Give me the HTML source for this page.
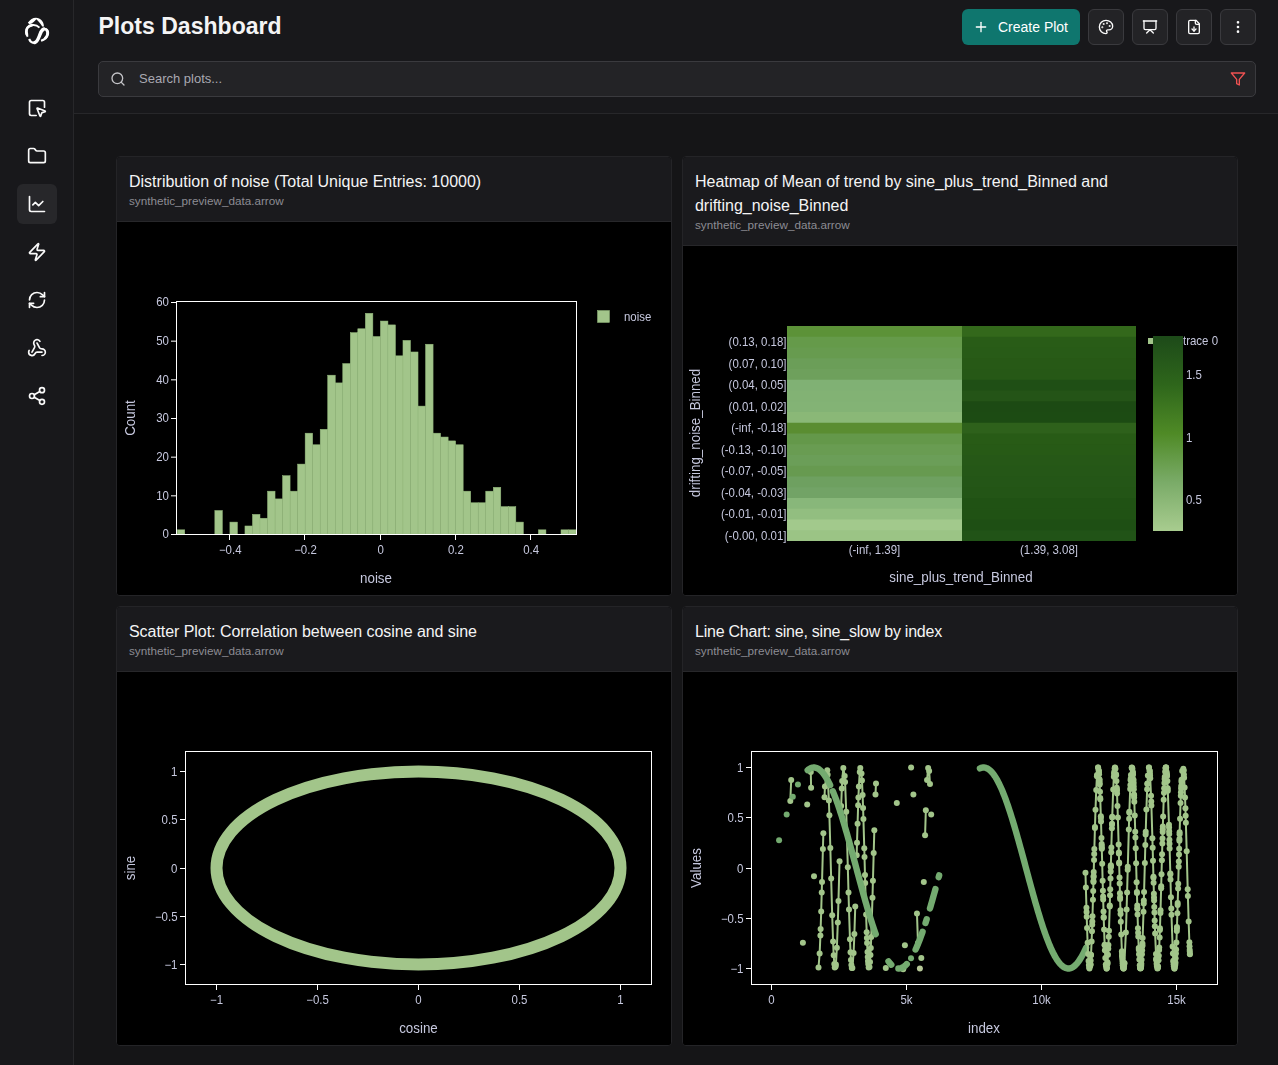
<!DOCTYPE html>
<html lang="en"><head><meta charset="utf-8"><title>Plots Dashboard</title>
<style>
*{box-sizing:border-box;margin:0;padding:0}
html,body{width:1278px;height:1065px;overflow:hidden;background:#151517;font-family:"Liberation Sans", sans-serif;color:#fafafa}
#side{position:absolute;left:0;top:0;width:74px;height:1065px;background:#18181b;border-right:1px solid #27272a}
#logo{position:absolute;left:17px;top:10px}
.nav{position:absolute;left:17px;width:40px;height:40px;border-radius:6px;display:flex;align-items:center;justify-content:center;color:#fafafa}
.nav.active{background:#27272a}
#top{position:absolute;left:74px;top:0;width:1204px;height:114px;background:#18181b;border-bottom:1px solid #27272a}
#top h1{position:absolute;left:24.4px;top:12px;font-size:23px;line-height:28px;font-weight:700;color:#f4f4f5;white-space:nowrap;letter-spacing:0.03px}
.btn{position:absolute;top:9px;height:36px;border-radius:6px;display:flex;align-items:center;justify-content:center}
.btn.primary{left:888px;width:118px;background:#0f766e;color:#fff;font-size:14px;font-weight:500;gap:9px;padding-right:1px}
.btn.ic{width:36px;background:#232326;border:1px solid #3a3a3e;color:#fafafa}
#search{position:absolute;left:24px;top:61px;width:1158px;height:36px;border-radius:5px;background:#232326;border:1px solid #3a3a3e}
#search .s{position:absolute;left:11px;top:9px;color:#c4c4c8}
#search span{position:absolute;left:40px;top:8.3px;font-size:13px;line-height:17px;color:#a9a9b2}
#search .f{position:absolute;right:9px;top:9px;color:#f05252}
.card{position:absolute;width:556px;height:440px;border:1px solid #242427;border-radius:4px;background:#000;overflow:hidden}
.chead{position:absolute;left:0;top:0;width:554px;background:#1a1a1d;border-bottom:1px solid #27272a;padding:13px 12px 0 12px}
.chead h2{font-size:16px;line-height:24px;font-weight:400;color:#f4f4f5;letter-spacing:0}
.chead p{font-size:11.7px;line-height:14px;color:#8c8c93;margin-top:0}
.cbody{position:absolute;left:0;width:554px;bottom:0;background:#000}
</style></head><body>
<aside id="side"><div id="logo"><svg width="40" height="40" viewBox="0 0 1065 1065" fill="none" stroke="#fff" stroke-linecap="butt" stroke-linejoin="round"><path fill="#fff" stroke="none" d="M288 338C345 262 425 208 505 208C625 210 712 300 718 438L672 442C630 362 580 300 515 243C470 300 410 352 332 380Z"/><path stroke-width="52" d="M598 470C545 415 470 392 400 402C295 422 240 500 248 585C252 635 264 675 284 712"/><path stroke-width="76" stroke-linecap="round" d="M400 404C300 425 242 500 250 585C252 610 256 630 262 650"/><path stroke-width="58" d="M322 772C350 845 420 882 470 870C550 848 585 720 615 640C650 545 700 500 742 500C800 505 830 570 812 650C795 725 725 790 640 818"/><path stroke-width="92" stroke-linecap="round" d="M470 868C550 846 585 720 615 640C640 570 675 525 712 508"/><path stroke-width="76" stroke-linecap="round" d="M780 525C815 555 826 600 812 650C805 685 785 718 758 745"/></svg></div><a class="nav" style="top:88px"><svg width="20" height="20" viewBox="0 0 24 24" fill="none" stroke="currentColor" stroke-width="2" stroke-linecap="round" stroke-linejoin="round" ><path d="M12.034 12.681a.498.498 0 0 1 .647-.647l9 3.5a.5.5 0 0 1-.033.943l-3.444 1.068a1 1 0 0 0-.66.66l-1.067 3.443a.5.5 0 0 1-.943.033z"/><path d="M21 11V5a2 2 0 0 0-2-2H5a2 2 0 0 0-2 2v14a2 2 0 0 0 2 2h6"/></svg></a><a class="nav" style="top:136px"><svg width="20" height="20" viewBox="0 0 24 24" fill="none" stroke="currentColor" stroke-width="2" stroke-linecap="round" stroke-linejoin="round" ><path d="M20 20a2 2 0 0 0 2-2V8a2 2 0 0 0-2-2h-7.9a2 2 0 0 1-1.69-.9L9.6 3.9A2 2 0 0 0 7.93 3H4a2 2 0 0 0-2 2v13a2 2 0 0 0 2 2Z"/></svg></a><a class="nav active" style="top:184px"><svg width="20" height="20" viewBox="0 0 24 24" fill="none" stroke="currentColor" stroke-width="2" stroke-linecap="round" stroke-linejoin="round" ><path d="M3 3v16a2 2 0 0 0 2 2h16"/><path d="m19 9-5 5-4-4-3 3"/></svg></a><a class="nav" style="top:232px"><svg width="20" height="20" viewBox="0 0 24 24" fill="none" stroke="currentColor" stroke-width="2" stroke-linecap="round" stroke-linejoin="round" ><path d="M4 14a1 1 0 0 1-.78-1.63l9.9-10.2a.5.5 0 0 1 .86.46l-1.92 6.02A1 1 0 0 0 13 10h7a1 1 0 0 1 .78 1.63l-9.9 10.2a.5.5 0 0 1-.86-.46l1.92-6.02A1 1 0 0 0 11 14z"/></svg></a><a class="nav" style="top:280px"><svg width="20" height="20" viewBox="0 0 24 24" fill="none" stroke="currentColor" stroke-width="2" stroke-linecap="round" stroke-linejoin="round" ><path d="M3 12a9 9 0 0 1 9-9 9.75 9.75 0 0 1 6.74 2.74L21 8"/><path d="M21 3v5h-5"/><path d="M21 12a9 9 0 0 1-9 9 9.75 9.75 0 0 1-6.74-2.74L3 16"/><path d="M8 16H3v5"/></svg></a><a class="nav" style="top:328px"><svg width="20" height="20" viewBox="0 0 24 24" fill="none" stroke="currentColor" stroke-width="2" stroke-linecap="round" stroke-linejoin="round" ><path d="M18 16.98h-5.99c-1.1 0-1.95.94-2.48 1.9A4 4 0 0 1 2 17c.01-.7.2-1.4.57-2"/><path d="m6 17 3.13-5.78c.53-.97.1-2.18-.5-3.1a4 4 0 1 1 6.89-4.06"/><path d="m12 6 3.13 5.73C15.66 12.7 16.9 13 18 13a4 4 0 0 1 0 8"/></svg></a><a class="nav" style="top:376px"><svg width="20" height="20" viewBox="0 0 24 24" fill="none" stroke="currentColor" stroke-width="2" stroke-linecap="round" stroke-linejoin="round" ><circle cx="18" cy="5" r="3"/><circle cx="6" cy="12" r="3"/><circle cx="18" cy="19" r="3"/><line x1="8.59" x2="15.42" y1="13.51" y2="17.49"/><line x1="15.41" x2="8.59" y1="6.51" y2="10.49"/></svg></a></aside>
<div id="top"><h1>Plots Dashboard</h1>
<div class="btn primary"><svg width="16" height="16" viewBox="0 0 24 24" fill="none" stroke="currentColor" stroke-width="2" stroke-linecap="round" stroke-linejoin="round" ><path d="M5 12h14"/><path d="M12 5v14"/></svg><span>Create Plot</span></div>
<div class="btn ic" style="left:1014px"><svg width="16" height="16" viewBox="0 0 24 24" fill="none" stroke="currentColor" stroke-width="2" stroke-linecap="round" stroke-linejoin="round" ><circle cx="13.5" cy="6.5" r=".5" fill="currentColor"/><circle cx="17.5" cy="10.5" r=".5" fill="currentColor"/><circle cx="8.5" cy="7.5" r=".5" fill="currentColor"/><circle cx="6.5" cy="12.5" r=".5" fill="currentColor"/><path d="M12 2C6.5 2 2 6.5 2 12s4.5 10 10 10c.926 0 1.648-.746 1.648-1.688 0-.437-.18-.835-.437-1.125-.29-.289-.438-.652-.438-1.125a1.64 1.64 0 0 1 1.668-1.668h1.996c3.051 0 5.555-2.503 5.555-5.554C21.965 6.012 17.461 2 12 2z"/></svg></div>
<div class="btn ic" style="left:1058px"><svg width="16" height="16" viewBox="0 0 24 24" fill="none" stroke="currentColor" stroke-width="2" stroke-linecap="round" stroke-linejoin="round" ><path d="M2 3h20"/><path d="M21 3v11a2 2 0 0 1-2 2H5a2 2 0 0 1-2-2V3"/><path d="m7 21 5-5 5 5"/></svg></div>
<div class="btn ic" style="left:1102px"><svg width="16" height="16" viewBox="0 0 24 24" fill="none" stroke="currentColor" stroke-width="2" stroke-linecap="round" stroke-linejoin="round" ><path d="M15 2H6a2 2 0 0 0-2 2v16a2 2 0 0 0 2 2h12a2 2 0 0 0 2-2V7Z"/><path d="M14 2v4a2 2 0 0 0 2 2h4"/><path d="M12 18v-6"/><path d="m9 15 3 3 3-3"/></svg></div>
<div class="btn ic" style="left:1146px"><svg width="16" height="16" viewBox="0 0 24 24" fill="none" stroke="currentColor" stroke-width="2" stroke-linecap="round" stroke-linejoin="round" ><circle cx="12" cy="12" r="1"/><circle cx="12" cy="5" r="1"/><circle cx="12" cy="19" r="1"/></svg></div>
<div id="search"><div class="s"><svg width="16" height="16" viewBox="0 0 24 24" fill="none" stroke="currentColor" stroke-width="2" stroke-linecap="round" stroke-linejoin="round" ><circle cx="11" cy="11" r="8"/><path d="m21 21-4.3-4.3"/></svg></div><span>Search plots...</span><div class="f"><svg width="16" height="16" viewBox="0 0 24 24" fill="none" stroke="currentColor" stroke-width="2" stroke-linecap="round" stroke-linejoin="round" ><polygon points="22 3 2 3 10 12.46 10 19 14 21 14 12.46 22 3"/></svg></div></div>
</div>
<main>
<section class="card" style="left:116px;top:156px"><header class="chead" style="height:65px"><h2 style="letter-spacing:0px">Distribution of noise (Total Unique Entries: 10000)</h2><p>synthetic_preview_data.arrow</p></header><div class="cbody" style="top:65px"><svg width="554" height="373" viewBox="117 222 554 373" font-family='"Liberation Sans", sans-serif' style="display:block;will-change:transform"><g><rect x="177.22" y="529.83" width="7.53" height="4.17" fill="#a2c58a" stroke="#94ba7d" stroke-width="0.5"/><rect x="214.85" y="510.5" width="7.53" height="23.5" fill="#a2c58a" stroke="#94ba7d" stroke-width="0.5"/><rect x="229.9" y="522.1" width="7.53" height="11.9" fill="#a2c58a" stroke="#94ba7d" stroke-width="0.5"/><rect x="244.95" y="525.97" width="7.53" height="8.03" fill="#a2c58a" stroke="#94ba7d" stroke-width="0.5"/><rect x="252.47" y="514.37" width="7.53" height="19.63" fill="#a2c58a" stroke="#94ba7d" stroke-width="0.5"/><rect x="260" y="518.23" width="7.53" height="15.77" fill="#a2c58a" stroke="#94ba7d" stroke-width="0.5"/><rect x="267.52" y="491.17" width="7.52" height="42.83" fill="#a2c58a" stroke="#94ba7d" stroke-width="0.5"/><rect x="275.05" y="498.9" width="7.53" height="35.1" fill="#a2c58a" stroke="#94ba7d" stroke-width="0.5"/><rect x="282.57" y="475.7" width="7.52" height="58.3" fill="#a2c58a" stroke="#94ba7d" stroke-width="0.5"/><rect x="290.1" y="491.17" width="7.53" height="42.83" fill="#a2c58a" stroke="#94ba7d" stroke-width="0.5"/><rect x="297.62" y="464.1" width="7.52" height="69.9" fill="#a2c58a" stroke="#94ba7d" stroke-width="0.5"/><rect x="305.15" y="433.17" width="7.52" height="100.83" fill="#a2c58a" stroke="#94ba7d" stroke-width="0.5"/><rect x="312.67" y="444.77" width="7.53" height="89.23" fill="#a2c58a" stroke="#94ba7d" stroke-width="0.5"/><rect x="320.2" y="429.3" width="7.52" height="104.7" fill="#a2c58a" stroke="#94ba7d" stroke-width="0.5"/><rect x="327.72" y="375.17" width="7.53" height="158.83" fill="#a2c58a" stroke="#94ba7d" stroke-width="0.5"/><rect x="335.25" y="382.9" width="7.53" height="151.1" fill="#a2c58a" stroke="#94ba7d" stroke-width="0.5"/><rect x="342.77" y="363.57" width="7.52" height="170.43" fill="#a2c58a" stroke="#94ba7d" stroke-width="0.5"/><rect x="350.3" y="332.63" width="7.53" height="201.37" fill="#a2c58a" stroke="#94ba7d" stroke-width="0.5"/><rect x="357.82" y="328.77" width="7.53" height="205.23" fill="#a2c58a" stroke="#94ba7d" stroke-width="0.5"/><rect x="365.35" y="313.3" width="7.52" height="220.7" fill="#a2c58a" stroke="#94ba7d" stroke-width="0.5"/><rect x="372.87" y="336.5" width="7.53" height="197.5" fill="#a2c58a" stroke="#94ba7d" stroke-width="0.5"/><rect x="380.4" y="321.03" width="7.53" height="212.97" fill="#a2c58a" stroke="#94ba7d" stroke-width="0.5"/><rect x="387.93" y="324.9" width="7.52" height="209.1" fill="#a2c58a" stroke="#94ba7d" stroke-width="0.5"/><rect x="395.45" y="355.83" width="7.53" height="178.17" fill="#a2c58a" stroke="#94ba7d" stroke-width="0.5"/><rect x="402.97" y="340.37" width="7.52" height="193.63" fill="#a2c58a" stroke="#94ba7d" stroke-width="0.5"/><rect x="410.5" y="351.97" width="7.53" height="182.03" fill="#a2c58a" stroke="#94ba7d" stroke-width="0.5"/><rect x="418.02" y="406.1" width="7.52" height="127.9" fill="#a2c58a" stroke="#94ba7d" stroke-width="0.5"/><rect x="425.55" y="344.23" width="7.53" height="189.77" fill="#a2c58a" stroke="#94ba7d" stroke-width="0.5"/><rect x="433.07" y="433.17" width="7.52" height="100.83" fill="#a2c58a" stroke="#94ba7d" stroke-width="0.5"/><rect x="440.6" y="437.03" width="7.53" height="96.97" fill="#a2c58a" stroke="#94ba7d" stroke-width="0.5"/><rect x="448.12" y="440.9" width="7.53" height="93.1" fill="#a2c58a" stroke="#94ba7d" stroke-width="0.5"/><rect x="455.65" y="444.77" width="7.52" height="89.23" fill="#a2c58a" stroke="#94ba7d" stroke-width="0.5"/><rect x="463.17" y="491.17" width="7.53" height="42.83" fill="#a2c58a" stroke="#94ba7d" stroke-width="0.5"/><rect x="470.7" y="502.77" width="7.52" height="31.23" fill="#a2c58a" stroke="#94ba7d" stroke-width="0.5"/><rect x="478.22" y="502.77" width="7.53" height="31.23" fill="#a2c58a" stroke="#94ba7d" stroke-width="0.5"/><rect x="485.75" y="491.17" width="7.52" height="42.83" fill="#a2c58a" stroke="#94ba7d" stroke-width="0.5"/><rect x="493.27" y="487.3" width="7.52" height="46.7" fill="#a2c58a" stroke="#94ba7d" stroke-width="0.5"/><rect x="500.8" y="506.63" width="7.52" height="27.37" fill="#a2c58a" stroke="#94ba7d" stroke-width="0.5"/><rect x="508.32" y="506.63" width="7.52" height="27.37" fill="#a2c58a" stroke="#94ba7d" stroke-width="0.5"/><rect x="515.85" y="522.1" width="7.53" height="11.9" fill="#a2c58a" stroke="#94ba7d" stroke-width="0.5"/><rect x="538.42" y="529.83" width="7.52" height="4.17" fill="#a2c58a" stroke="#94ba7d" stroke-width="0.5"/><rect x="561" y="529.83" width="7.52" height="4.17" fill="#a2c58a" stroke="#94ba7d" stroke-width="0.5"/><rect x="568.52" y="529.83" width="7.52" height="4.17" fill="#a2c58a" stroke="#94ba7d" stroke-width="0.5"/></g><rect x="176.5" y="301.5" width="400" height="233" fill="none" stroke="#fff" stroke-width="1"/><line x1="229.5" x2="229.5" y1="535" y2="540" stroke="#fff" stroke-width="1"/><line x1="304.5" x2="304.5" y1="535" y2="540" stroke="#fff" stroke-width="1"/><line x1="380.5" x2="380.5" y1="535" y2="540" stroke="#fff" stroke-width="1"/><line x1="455.5" x2="455.5" y1="535" y2="540" stroke="#fff" stroke-width="1"/><line x1="530.5" x2="530.5" y1="535" y2="540" stroke="#fff" stroke-width="1"/><line x1="171" x2="176" y1="534.5" y2="534.5" stroke="#fff" stroke-width="1"/><line x1="171" x2="176" y1="495.83" y2="495.83" stroke="#fff" stroke-width="1"/><line x1="171" x2="176" y1="457.17" y2="457.17" stroke="#fff" stroke-width="1"/><line x1="171" x2="176" y1="418.5" y2="418.5" stroke="#fff" stroke-width="1"/><line x1="171" x2="176" y1="379.83" y2="379.83" stroke="#fff" stroke-width="1"/><line x1="171" x2="176" y1="341.17" y2="341.17" stroke="#fff" stroke-width="1"/><line x1="171" x2="176" y1="302.5" y2="302.5" stroke="#fff" stroke-width="1"/><text transform="translate(230.2,553.5) scale(0.955,1)" font-size="12" text-anchor="middle" fill="#c6c8de" >−0.4</text><text transform="translate(305.45,553.5) scale(0.955,1)" font-size="12" text-anchor="middle" fill="#c6c8de" >−0.2</text><text transform="translate(380.7,553.5) scale(0.955,1)" font-size="12" text-anchor="middle" fill="#c6c8de" >0</text><text transform="translate(455.95,553.5) scale(0.955,1)" font-size="12" text-anchor="middle" fill="#c6c8de" >0.2</text><text transform="translate(531.2,553.5) scale(0.955,1)" font-size="12" text-anchor="middle" fill="#c6c8de" >0.4</text><text transform="translate(169,538.3) scale(0.955,1)" font-size="12" text-anchor="end" fill="#c6c8de" >0</text><text transform="translate(169,499.63) scale(0.955,1)" font-size="12" text-anchor="end" fill="#c6c8de" >10</text><text transform="translate(169,460.97) scale(0.955,1)" font-size="12" text-anchor="end" fill="#c6c8de" >20</text><text transform="translate(169,422.3) scale(0.955,1)" font-size="12" text-anchor="end" fill="#c6c8de" >30</text><text transform="translate(169,383.63) scale(0.955,1)" font-size="12" text-anchor="end" fill="#c6c8de" >40</text><text transform="translate(169,344.97) scale(0.955,1)" font-size="12" text-anchor="end" fill="#c6c8de" >50</text><text transform="translate(169,306.3) scale(0.955,1)" font-size="12" text-anchor="end" fill="#c6c8de" >60</text><text transform="translate(376,583) scale(0.955,1)" font-size="14" text-anchor="middle" fill="#c6c8de" >noise</text><text transform="translate(135,418) rotate(-90) scale(0.955,1)" font-size="14" text-anchor="middle" fill="#c6c8de">Count</text><rect x="597.5" y="310.5" width="12" height="12" fill="#a2c58a" stroke="#94ba7d" stroke-width="0.5"/><text transform="translate(624,321) scale(0.955,1)" font-size="12" text-anchor="start" fill="#c6c8de" >noise</text></svg></div></section>
<section class="card" style="left:682px;top:156px"><header class="chead" style="height:89px"><h2 style="letter-spacing:-0.03px">Heatmap of Mean of trend by sine_plus_trend_Binned and<br>drifting_noise_Binned</h2><p>synthetic_preview_data.arrow</p></header><div class="cbody" style="top:89px"><svg width="554" height="349" viewBox="683 246 554 349" font-family='"Liberation Sans", sans-serif' style="display:block;will-change:transform"><rect x="787" y="326" width="175" height="215" fill="#5c9238"/><rect x="962" y="326" width="174" height="215" fill="#33681b"/><rect x="787" y="336.75" width="175" height="204.25" fill="#659a4a"/><rect x="962" y="336.75" width="174" height="204.25" fill="#295c17"/><rect x="787" y="347.5" width="175" height="193.5" fill="#679b4f"/><rect x="962" y="347.5" width="174" height="193.5" fill="#285b17"/><rect x="787" y="358.25" width="175" height="182.75" fill="#6b9e58"/><rect x="962" y="358.25" width="174" height="182.75" fill="#275916"/><rect x="787" y="369" width="175" height="172" fill="#6ea05c"/><rect x="962" y="369" width="174" height="172" fill="#265816"/><rect x="787" y="379.75" width="175" height="161.25" fill="#80b174"/><rect x="962" y="379.75" width="174" height="161.25" fill="#1f4f15"/><rect x="787" y="390.5" width="175" height="150.5" fill="#82b274"/><rect x="962" y="390.5" width="174" height="150.5" fill="#245417"/><rect x="787" y="401.25" width="175" height="139.75" fill="#83b375"/><rect x="962" y="401.25" width="174" height="139.75" fill="#1c4a13"/><rect x="787" y="412" width="175" height="129" fill="#8ab877"/><rect x="962" y="412" width="174" height="129" fill="#1c4b13"/><rect x="787" y="422.75" width="175" height="118.25" fill="#5a8d31"/><rect x="962" y="422.75" width="174" height="118.25" fill="#2e611b"/><rect x="787" y="433.5" width="175" height="107.5" fill="#64984a"/><rect x="962" y="433.5" width="174" height="107.5" fill="#285b16"/><rect x="787" y="444.25" width="175" height="96.75" fill="#699c52"/><rect x="962" y="444.25" width="174" height="96.75" fill="#275a16"/><rect x="787" y="455" width="175" height="86" fill="#6b9e58"/><rect x="962" y="455" width="174" height="86" fill="#265817"/><rect x="787" y="465.75" width="175" height="75.25" fill="#679a50"/><rect x="962" y="465.75" width="174" height="75.25" fill="#255717"/><rect x="787" y="476.5" width="175" height="64.5" fill="#6ea060"/><rect x="962" y="476.5" width="174" height="64.5" fill="#245617"/><rect x="787" y="487.25" width="175" height="53.75" fill="#72a366"/><rect x="962" y="487.25" width="174" height="53.75" fill="#235516"/><rect x="787" y="498" width="175" height="43" fill="#88b77a"/><rect x="962" y="498" width="174" height="43" fill="#205214"/><rect x="787" y="508.75" width="175" height="32.25" fill="#92be80"/><rect x="962" y="508.75" width="174" height="32.25" fill="#205214"/><rect x="787" y="519.5" width="175" height="21.5" fill="#a2c98c"/><rect x="962" y="519.5" width="174" height="21.5" fill="#1e4f14"/><rect x="787" y="530.25" width="175" height="10.75" fill="#9bc485"/><rect x="962" y="530.25" width="174" height="10.75" fill="#215317"/><text transform="translate(786.5,539.62) scale(0.955,1)" font-size="12" text-anchor="end" fill="#c6c8de" >(-0.00, 0.01]</text><text transform="translate(786.5,518.12) scale(0.955,1)" font-size="12" text-anchor="end" fill="#c6c8de" >(-0.01, -0.01]</text><text transform="translate(786.5,496.62) scale(0.955,1)" font-size="12" text-anchor="end" fill="#c6c8de" >(-0.04, -0.03]</text><text transform="translate(786.5,475.12) scale(0.955,1)" font-size="12" text-anchor="end" fill="#c6c8de" >(-0.07, -0.05]</text><text transform="translate(786.5,453.62) scale(0.955,1)" font-size="12" text-anchor="end" fill="#c6c8de" >(-0.13, -0.10]</text><text transform="translate(786.5,432.12) scale(0.955,1)" font-size="12" text-anchor="end" fill="#c6c8de" >(-inf, -0.18]</text><text transform="translate(786.5,410.62) scale(0.955,1)" font-size="12" text-anchor="end" fill="#c6c8de" >(0.01, 0.02]</text><text transform="translate(786.5,389.12) scale(0.955,1)" font-size="12" text-anchor="end" fill="#c6c8de" >(0.04, 0.05]</text><text transform="translate(786.5,367.62) scale(0.955,1)" font-size="12" text-anchor="end" fill="#c6c8de" >(0.07, 0.10]</text><text transform="translate(786.5,346.12) scale(0.955,1)" font-size="12" text-anchor="end" fill="#c6c8de" >(0.13, 0.18]</text><text transform="translate(874.5,554) scale(0.955,1)" font-size="12" text-anchor="middle" fill="#c6c8de" >(-inf, 1.39]</text><text transform="translate(1049,554) scale(0.955,1)" font-size="12" text-anchor="middle" fill="#c6c8de" >(1.39, 3.08]</text><text transform="translate(961,582) scale(0.955,1)" font-size="14" text-anchor="middle" fill="#c6c8de" >sine_plus_trend_Binned</text><text transform="translate(700,433) rotate(-90) scale(0.955,1)" font-size="14" text-anchor="middle" fill="#c6c8de">drifting_noise_Binned</text><defs><linearGradient id="cb" x1="0" y1="1" x2="0" y2="0"><stop offset="0" stop-color="#a8cc8f"/><stop offset="0.25" stop-color="#7aab68"/><stop offset="0.5" stop-color="#4f8a26"/><stop offset="0.75" stop-color="#2e661b"/><stop offset="1" stop-color="#1d4a19"/></linearGradient></defs><rect x="1153" y="336" width="30" height="195" fill="url(#cb)"/><text transform="translate(1186,379.2) scale(0.955,1)" font-size="12" text-anchor="start" fill="#c6c8de" >1.5</text><text transform="translate(1186,441.7) scale(0.955,1)" font-size="12" text-anchor="start" fill="#c6c8de" >1</text><text transform="translate(1186,504.2) scale(0.955,1)" font-size="12" text-anchor="start" fill="#c6c8de" >0.5</text><rect x="1148" y="338" width="5" height="6" fill="#a2c58a"/><text transform="translate(1183,345) scale(0.955,1)" font-size="12" text-anchor="start" fill="#c6c8de" >trace 0</text></svg></div></section>
<section class="card" style="left:116px;top:606px"><header class="chead" style="height:65px"><h2 style="letter-spacing:-0.05px">Scatter Plot: Correlation between cosine and sine</h2><p>synthetic_preview_data.arrow</p></header><div class="cbody" style="top:65px"><svg width="554" height="373" viewBox="117 672 554 373" font-family='"Liberation Sans", sans-serif' style="display:block;will-change:transform"><ellipse cx="418.5" cy="868" rx="202" ry="96.5" fill="none" stroke="#a2c58a" stroke-width="12"/><rect x="185.5" y="751.5" width="466" height="233" fill="none" stroke="#fff" stroke-width="1"/><line x1="216.5" x2="216.5" y1="985" y2="990" stroke="#fff" stroke-width="1"/><line x1="317.5" x2="317.5" y1="985" y2="990" stroke="#fff" stroke-width="1"/><line x1="418.5" x2="418.5" y1="985" y2="990" stroke="#fff" stroke-width="1"/><line x1="519.5" x2="519.5" y1="985" y2="990" stroke="#fff" stroke-width="1"/><line x1="620.5" x2="620.5" y1="985" y2="990" stroke="#fff" stroke-width="1"/><line x1="180" x2="185" y1="771.5" y2="771.5" stroke="#fff" stroke-width="1"/><line x1="180" x2="185" y1="819.5" y2="819.5" stroke="#fff" stroke-width="1"/><line x1="180" x2="185" y1="868.5" y2="868.5" stroke="#fff" stroke-width="1"/><line x1="180" x2="185" y1="916.5" y2="916.5" stroke="#fff" stroke-width="1"/><line x1="180" x2="185" y1="964.5" y2="964.5" stroke="#fff" stroke-width="1"/><text transform="translate(216.5,1004) scale(0.955,1)" font-size="12" text-anchor="middle" fill="#c6c8de" >−1</text><text transform="translate(317.5,1004) scale(0.955,1)" font-size="12" text-anchor="middle" fill="#c6c8de" >−0.5</text><text transform="translate(418.5,1004) scale(0.955,1)" font-size="12" text-anchor="middle" fill="#c6c8de" >0</text><text transform="translate(519.5,1004) scale(0.955,1)" font-size="12" text-anchor="middle" fill="#c6c8de" >0.5</text><text transform="translate(620.5,1004) scale(0.955,1)" font-size="12" text-anchor="middle" fill="#c6c8de" >1</text><text transform="translate(177.5,775.7) scale(0.955,1)" font-size="12" text-anchor="end" fill="#c6c8de" >1</text><text transform="translate(177.5,823.7) scale(0.955,1)" font-size="12" text-anchor="end" fill="#c6c8de" >0.5</text><text transform="translate(177.5,872.7) scale(0.955,1)" font-size="12" text-anchor="end" fill="#c6c8de" >0</text><text transform="translate(177.5,920.7) scale(0.955,1)" font-size="12" text-anchor="end" fill="#c6c8de" >−0.5</text><text transform="translate(177.5,968.7) scale(0.955,1)" font-size="12" text-anchor="end" fill="#c6c8de" >−1</text><text transform="translate(418.5,1033) scale(0.955,1)" font-size="14" text-anchor="middle" fill="#c6c8de" >cosine</text><text transform="translate(135,868) rotate(-90) scale(0.955,1)" font-size="14" text-anchor="middle" fill="#c6c8de">sine</text></svg></div></section>
<section class="card" style="left:682px;top:606px"><header class="chead" style="height:65px"><h2 style="letter-spacing:-0.23px">Line Chart: sine, sine_slow by index</h2><p>synthetic_preview_data.arrow</p></header><div class="cbody" style="top:65px"><svg width="554" height="373" viewBox="683 672 554 373" font-family='"Liberation Sans", sans-serif' style="display:block;will-change:transform"><g fill="#a2c58a" stroke="#a2c58a" stroke-width="2" stroke-linejoin="round" stroke-linecap="round"><polyline fill="none" points="790.3,801 791.2,780"/><polyline fill="none" points="810.8,771.9 811.1,787.7"/><polyline fill="none" points="818.51,967.6 819.64,953.6 820.4,935.6 820.63,929 821.19,911.5 821.73,892.6 822.02,882 822.91,849 823.35,833.3"/><polyline fill="none" points="824.5,797.3 824.94,786.6 827.26,770.2 827.66,774.7 828.89,800.6 829.39,815.3 830.34,848 831.16,878.5 832.2,915.2 833.09,941.6 833.71,955.2 834.31,964 834.74,967.5 835.66,966.5 835.88,964.5 836.88,947.8 837.81,922.5 838.45,901.1 839.54,861.3"/><polyline fill="none" points="841.15,806 841.82,788.6 842.19,780.9 843.33,768 844.71,775.9 845.07,782 846.24,811.7 847.82,867.2 848.5,892.4 848.99,909.5 849.97,939.2 850.53,952.3 850.96,960 851.37,965 851.81,968 852.35,968 853.6,953 854.39,934 855.26,906.5"/><polyline fill="none" points="856.67,855.3 857.01,842.7 857.56,823.7 858.15,805.2 858.42,797.6 858.87,786.6 859.76,771.9 860.29,768 861.51,773.6 861.95,780.4 862.61,795 863.08,808 863.43,819 864.27,848.3 864.51,857 865,875.1 865.21,883 866.11,914.6 866.68,932.3 866.89,938 867.08,943 867.48,952 867.74,957 868,961 868.24,964 868.67,967.5 869.51,967 870.02,962 870.46,955 870.8,948 871.24,937 872.48,897.7 872.94,880.8 873.69,853.1 874.33,830.3"/><polyline fill="none" points="875.51,794.4 875.99,783.4"/><polyline fill="none" points="916.96,913.4 917.97,943"/><polyline fill="none" points="925.08,835.3 925.84,810.2"/><polyline fill="none" points="927.06,780 928.15,768 929.15,771.1 929.99,783.9"/></g><g fill="#a2c58a"><circle cx="790.3" cy="801" r="3"/><circle cx="791.2" cy="780" r="3"/><circle cx="807.2" cy="804.4" r="3"/><circle cx="810.8" cy="771.9" r="3"/><circle cx="811.1" cy="787.7" r="3"/><circle cx="814" cy="876.3" r="3"/><circle cx="802.9" cy="942.8" r="3"/><circle cx="818.51" cy="967.6" r="3"/><circle cx="819.64" cy="953.6" r="3"/><circle cx="820.4" cy="935.6" r="3"/><circle cx="820.63" cy="929" r="3"/><circle cx="821.19" cy="911.5" r="3"/><circle cx="821.73" cy="892.6" r="3"/><circle cx="822.02" cy="882" r="3"/><circle cx="822.91" cy="849" r="3"/><circle cx="823.35" cy="833.3" r="3"/><circle cx="824.5" cy="797.3" r="3"/><circle cx="824.94" cy="786.6" r="3"/><circle cx="827.26" cy="770.2" r="3"/><circle cx="827.66" cy="774.7" r="3"/><circle cx="828.89" cy="800.6" r="3"/><circle cx="829.39" cy="815.3" r="3"/><circle cx="830.34" cy="848" r="3"/><circle cx="831.16" cy="878.5" r="3"/><circle cx="832.2" cy="915.2" r="3"/><circle cx="833.09" cy="941.6" r="3"/><circle cx="833.71" cy="955.2" r="3"/><circle cx="834.31" cy="964" r="3"/><circle cx="834.74" cy="967.5" r="3"/><circle cx="835.66" cy="966.5" r="3"/><circle cx="835.88" cy="964.5" r="3"/><circle cx="836.88" cy="947.8" r="3"/><circle cx="837.81" cy="922.5" r="3"/><circle cx="838.45" cy="901.1" r="3"/><circle cx="839.54" cy="861.3" r="3"/><circle cx="841.15" cy="806" r="3"/><circle cx="841.82" cy="788.6" r="3"/><circle cx="842.19" cy="780.9" r="3"/><circle cx="843.33" cy="768" r="3"/><circle cx="844.71" cy="775.9" r="3"/><circle cx="845.07" cy="782" r="3"/><circle cx="846.24" cy="811.7" r="3"/><circle cx="847.82" cy="867.2" r="3"/><circle cx="848.5" cy="892.4" r="3"/><circle cx="848.99" cy="909.5" r="3"/><circle cx="849.97" cy="939.2" r="3"/><circle cx="850.53" cy="952.3" r="3"/><circle cx="850.96" cy="960" r="3"/><circle cx="851.37" cy="965" r="3"/><circle cx="851.81" cy="968" r="3"/><circle cx="852.35" cy="968" r="3"/><circle cx="853.6" cy="953" r="3"/><circle cx="854.39" cy="934" r="3"/><circle cx="855.26" cy="906.5" r="3"/><circle cx="856.67" cy="855.3" r="3"/><circle cx="857.01" cy="842.7" r="3"/><circle cx="857.56" cy="823.7" r="3"/><circle cx="858.15" cy="805.2" r="3"/><circle cx="858.42" cy="797.6" r="3"/><circle cx="858.87" cy="786.6" r="3"/><circle cx="859.76" cy="771.9" r="3"/><circle cx="860.29" cy="768" r="3"/><circle cx="861.51" cy="773.6" r="3"/><circle cx="861.95" cy="780.4" r="3"/><circle cx="862.61" cy="795" r="3"/><circle cx="863.08" cy="808" r="3"/><circle cx="863.43" cy="819" r="3"/><circle cx="864.27" cy="848.3" r="3"/><circle cx="864.51" cy="857" r="3"/><circle cx="865" cy="875.1" r="3"/><circle cx="865.21" cy="883" r="3"/><circle cx="866.11" cy="914.6" r="3"/><circle cx="866.68" cy="932.3" r="3"/><circle cx="866.89" cy="938" r="3"/><circle cx="867.08" cy="943" r="3"/><circle cx="867.48" cy="952" r="3"/><circle cx="867.74" cy="957" r="3"/><circle cx="868" cy="961" r="3"/><circle cx="868.24" cy="964" r="3"/><circle cx="868.67" cy="967.5" r="3"/><circle cx="869.51" cy="967" r="3"/><circle cx="870.02" cy="962" r="3"/><circle cx="870.46" cy="955" r="3"/><circle cx="870.8" cy="948" r="3"/><circle cx="871.24" cy="937" r="3"/><circle cx="872.48" cy="897.7" r="3"/><circle cx="872.94" cy="880.8" r="3"/><circle cx="873.69" cy="853.1" r="3"/><circle cx="874.33" cy="830.3" r="3"/><circle cx="875.51" cy="794.4" r="3"/><circle cx="875.99" cy="783.4" r="3"/><circle cx="896.8" cy="802.9" r="3"/><circle cx="911.1" cy="767.6" r="3"/><circle cx="913.4" cy="794.4" r="3"/><circle cx="916.96" cy="913.4" r="3"/><circle cx="917.97" cy="943" r="3"/><circle cx="904.9" cy="945.2" r="3"/><circle cx="923.8" cy="881.9" r="3"/><circle cx="921.3" cy="957.9" r="3"/><circle cx="885.8" cy="968.1" r="3"/><circle cx="903.2" cy="969.2" r="3"/><circle cx="925.08" cy="835.3" r="3"/><circle cx="925.84" cy="810.2" r="3"/><circle cx="927.06" cy="780" r="3"/><circle cx="928.15" cy="768" r="3"/><circle cx="929.15" cy="771.1" r="3"/><circle cx="929.99" cy="783.9" r="3"/><circle cx="931.2" cy="814.4" r="3"/></g><circle cx="919.9" cy="968.4" r="3" fill="#b7c898"/><g fill="#74ab70"><circle cx="779.09" cy="840.13" r="3"/><circle cx="786.67" cy="814.45" r="3"/><circle cx="792.8" cy="796.68" r="3"/><circle cx="797.93" cy="784.59" r="3"/><circle cx="911.01" cy="958.29" r="3"/></g><g fill="none" stroke="#74ab70" stroke-width="6.4" stroke-linecap="round" stroke-linejoin="round"><polyline points="807.68,770.16 808.36,769.62 809.04,769.13 809.72,768.71 810.4,768.35 811.08,768.05 811.76,767.82 812.45,767.65 813.13,767.54 813.81,767.5 814.49,767.52 815.17,767.61 815.85,767.76 816.53,767.97 817.21,768.25 817.89,768.59 818.57,768.99 819.25,769.46 819.93,769.99 820.61,770.58 821.29,771.23 821.98,771.95 822.66,772.72 823.34,773.56 824.02,774.46 824.7,775.41 825.38,776.43 826.06,777.5 826.74,778.63 827.42,779.82 828.1,781.06 828.78,782.36 829.46,783.72 830.14,785.12"/><polyline points="832.84,791.21 833.52,792.87 834.21,794.58 834.89,796.33 835.57,798.13 836.25,799.97 836.93,801.86 837.61,803.78 838.29,805.75 838.97,807.76 839.65,809.81 840.33,811.89 841.01,814.01 841.69,816.16 842.37,818.35 843.05,820.57 843.73,822.82 844.41,825.09 845.09,827.4 845.77,829.73 846.46,832.08 847.14,834.46 847.82,836.86 848.5,839.28 849.18,841.71 849.86,844.17 850.54,846.63 851.22,849.12 851.9,851.61 852.58,854.11 853.26,856.63 853.94,859.15 854.62,861.67 855.3,864.2 855.98,866.74 856.66,869.27 857.34,871.8 858.03,874.33 858.71,876.86 859.39,879.38 860.07,881.89 860.75,884.4 861.43,886.89 862.11,889.37 862.79,891.84 863.47,894.29 864.15,896.73 864.83,899.15 865.51,901.55 866.19,903.92 866.87,906.28 867.55,908.61 868.23,910.91 868.91,913.19 869.59,915.44 870.28,917.65 870.96,919.84 871.64,921.99 872.32,924.11 873,926.2 873.68,928.24 874.36,930.25 875.04,932.22 875.72,934.15"/><polyline points="888.49,961.35 889.19,962.29 889.89,963.16 890.6,963.97 891.3,964.71"/><polyline points="898.4,968.49 899.1,968.49 899.8,968.42 900.49,968.29 901.19,968.08 901.89,967.82 902.59,967.48 903.28,967.08 903.98,966.61 904.68,966.08 905.38,965.48 906.07,964.81 906.77,964.08"/><polyline points="915.6,949.52 916.3,947.98 916.99,946.38 917.69,944.74 918.39,943.04 919.08,941.29 919.78,939.49 920.48,937.64 921.17,935.75 921.87,933.81 922.57,931.83"/><polyline points="925.51,923.01 926.1,921.14 926.7,919.26"/><polyline points="929.96,908.45 930.65,906.1 931.33,903.73 932.02,901.33 932.7,898.92 933.39,896.48 934.07,894.02 934.76,891.55 935.44,889.07"/><polyline points="938.68,877.15 938.93,876.25 939.17,875.35"/><polyline points="979.94,768.4 980.62,768.1 981.29,767.85 981.97,767.67 982.64,767.56 983.32,767.5 984,767.51 984.67,767.59 985.35,767.72 986.02,767.92 986.7,768.18 987.37,768.5 988.05,768.89 988.73,769.34 989.4,769.85 990.08,770.42 990.75,771.05 991.43,771.74 992.11,772.49 992.78,773.31 993.46,774.18 994.13,775.11 994.81,776.1 995.48,777.15 996.16,778.25 996.84,779.41 997.51,780.63 998.19,781.9 998.86,783.22 999.54,784.6 1000.22,786.03 1000.89,787.51 1001.57,789.04 1002.24,790.62 1002.92,792.25 1003.6,793.93 1004.27,795.65 1004.95,797.42 1005.62,799.23 1006.3,801.09 1006.97,802.99 1007.65,804.93 1008.33,806.9 1009,808.92 1009.68,810.97 1010.35,813.06 1011.03,815.19 1011.71,817.34 1012.38,819.53 1013.06,821.75 1013.73,824 1014.41,826.27 1015.08,828.57 1015.76,830.9 1016.44,833.25 1017.11,835.62 1017.79,838.01 1018.46,840.42 1019.14,842.85 1019.82,845.29 1020.49,847.75 1021.17,850.22 1021.84,852.7 1022.52,855.19 1023.2,857.69 1023.87,860.2 1024.55,862.71 1025.22,865.22 1025.9,867.74 1026.57,870.25 1027.25,872.77 1027.93,875.28 1028.6,877.78 1029.28,880.29 1029.95,882.78 1030.63,885.26 1031.31,887.73 1031.98,890.19 1032.66,892.64 1033.33,895.07 1034.01,897.49 1034.68,899.88 1035.36,902.26 1036.04,904.61 1036.71,906.94 1037.39,909.25 1038.06,911.53 1038.74,913.78 1039.42,916.01 1040.09,918.2 1040.77,920.37 1041.44,922.5 1042.12,924.59 1042.79,926.65 1043.47,928.68 1044.15,930.66 1044.82,932.61 1045.5,934.52 1046.17,936.38 1046.85,938.2 1047.53,939.98 1048.2,941.72 1048.88,943.4 1049.55,945.04 1050.23,946.63 1050.91,948.17 1051.58,949.67 1052.26,951.11 1052.93,952.5 1053.61,953.83 1054.28,955.11 1054.96,956.34 1055.64,957.51 1056.31,958.63 1056.99,959.69 1057.66,960.69 1058.34,961.63 1059.02,962.52 1059.69,963.34 1060.37,964.11 1061.04,964.81 1061.72,965.46 1062.39,966.04 1063.07,966.56 1063.75,967.02 1064.42,967.42 1065.1,967.76 1065.77,968.03 1066.45,968.24 1067.13,968.39 1067.8,968.48 1068.48,968.5 1069.15,968.46 1069.83,968.36 1070.51,968.19 1071.18,967.96 1071.86,967.67 1072.53,967.31 1073.21,966.9 1073.88,966.42 1074.56,965.88 1075.24,965.28 1075.91,964.62 1076.59,963.89 1077.26,963.11 1077.94,962.27 1078.62,961.37 1079.29,960.41 1079.97,959.39 1080.64,958.31 1081.32,957.18 1081.99,955.99 1082.67,954.75 1083.35,953.45 1084.02,952.1 1084.7,950.7 1085.37,949.24 1086.05,947.74"/></g><g fill="#a2c58a" stroke="#a2c58a" stroke-width="2" stroke-linejoin="round" stroke-linecap="round"><polyline fill="none" points="1085.47,872.8 1085.87,887.5 1086.44,907.7 1086.57,912 1086.71,916.7 1087.07,928 1087.61,942.7 1088.12,954 1088.54,961 1088.87,965 1089.21,967.5 1089.47,968.4 1090.18,966.07 1090.26,965.37 1090.32,964.85 1090.37,964.3 1090.4,964 1090.67,960.56 1090.99,955.2 1091.02,954.7 1091.61,941.52 1091.99,931.23 1092.21,924.79 1092.31,921.43 1092.48,916.23 1092.96,899.66 1093.2,890.96 1093.45,882.08 1093.47,881.08 1093.58,877.08 1093.61,876.08 1093.72,872.07 1094.04,860.02 1094.2,854.03 1094.34,849.07 1094.93,827.99 1094.96,827.07 1095.5,809.65 1096.23,789.94 1096.93,776.29 1097.01,775.1 1098.04,767.51 1098.09,767.5 1098.71,770.35 1098.79,771.11 1098.9,772.25 1099.06,774.25 1099.39,779.26 1099.41,779.74 1099.5,781.22 1099.6,783.32 1099.66,784.42 1099.98,791.7 1100.22,797.89 1100.28,799.34 1100.85,816.15 1100.9,817.88 1101.01,821.4 1101.49,838.1 1101.66,843.9 1101.71,845.86 1101.76,847.83 1101.79,848.81 1102.2,863.77 1102.65,880.82 1102.92,890.7 1103.09,896.53 1103.17,899.41 1103.52,911.52 1103.68,916.88 1103.71,917.75 1104.09,929.45 1104.65,944.68 1104.68,945.32 1104.9,950.21 1105.3,957.92 1105.79,964.5 1105.95,966.01 1106.6,968.49 1106.65,968.43 1106.95,967.41 1107.35,964.1 1107.38,963.8 1107.51,962.16 1107.97,954.86 1108.27,948.78 1108.43,945.05 1108.76,936.78 1108.97,930.7 1109.73,906.55 1109.76,905.62 1110.05,895.17 1110.21,889.31 1110.51,878.4 1110.7,871.39 1110.81,867.37 1110.84,866.36 1110.86,865.36 1111.21,852.36 1111.35,847.41 1111.89,828.28 1112,824.62 1112.02,823.72 1112.21,817.52 1112.24,816.65 1113.21,789.51 1113.86,776.84 1114.08,773.75 1114.21,772.12 1114.67,768.41 1114.89,767.65 1114.99,767.51 1115.45,768.71 1116.02,774.14 1116.1,775.26 1116.45,781.06 1116.78,787.72 1116.86,789.57 1116.91,790.84 1117.02,793.48 1117.48,805.96 1117.86,817.6 1118.64,844.57 1118.86,852.46 1118.88,853.45 1119.12,862.45 1119.15,863.45 1119.53,877.5 1119.69,883.49 1119.96,893.32 1120.07,897.19 1120.12,899.11 1120.45,910.32 1120.56,913.94 1120.8,921.78 1121.23,934.62 1121.91,951.17 1121.99,952.82 1122.12,955.41 1122.15,955.9 1122.28,958.23 1122.45,960.72 1122.63,963.2 1122.82,965.22 1122.85,965.47 1122.99,966.57 1123.26,968.04 1123.5,968.5 1123.58,968.47 1123.69,968.29 1124.12,965.99 1124.36,963.59 1124.42,962.95 1125.88,932.5 1126.6,909.61 1127.09,892.56 1127.71,869.7 1127.79,866.68 1128.82,829.5 1129.14,818.67 1129.33,812.66 1129.36,811.83 1130.19,789.08 1130.38,784.92 1130.63,780.18 1130.71,778.75 1130.95,774.96 1131.73,767.98 1131.84,767.67 1131.9,767.57 1132.41,768.66 1132.81,772.06 1132.87,772.68 1133.03,774.76 1133.33,779.44 1133.35,779.91 1133.46,781.92 1133.54,783.51 1133.68,786.34 1133.81,789.37 1134.03,794.62 1134.06,795.31 1134.14,797.43 1134.3,801.85 1134.76,815.6 1135.24,831.8 1135.41,837.49 1135.7,848.18 1136.11,863.13 1136.62,882.17 1136.89,892.04 1136.92,893.01 1137.27,905.42 1137.35,908.2 1137.38,909.12 1137.54,914.54 1137.97,928.14 1138.13,932.86 1138.27,936.62 1138.73,948.05 1138.81,949.84 1139.02,954.24 1139.32,959.38 1139.78,965.14 1140.1,967.53 1140.18,967.9 1140.29,968.26 1140.4,968.46 1140.75,967.99 1140.78,967.88 1141.05,966.28 1141.16,965.36 1141.32,963.69 1141.62,959.74 1141.94,954.16 1142.13,950.33 1142.32,946.1 1142.35,945.46 1142.43,943.51 1142.64,937.97 1143.51,911.72 1143.75,903.41 1143.83,900.57 1144.07,891.9 1144.86,862.98 1145.34,845.1 1145.64,834.49 1145.72,831.66 1146.39,809.61 1147.15,789.28 1147.39,783.98 1147.42,783.44 1147.88,775.47 1148.88,767.55 1149.01,767.52 1149.66,770.86 1149.69,771.12 1149.88,773.22 1150.04,775.4 1150.23,778.36 1151.04,795.79 1151.26,801.61 1151.39,805.46 1152.39,838.14 1152.66,847.87 1153.01,860.8 1153.44,876.87 1153.47,877.87 1153.6,882.85 1153.9,893.67 1154.01,897.54 1154.09,900.41 1154.28,906.98 1154.44,912.47 1154.68,920.39 1154.87,926.26 1155.12,933.38 1155.98,954.07 1156.25,958.82 1156.28,959.25 1156.36,960.47 1156.6,963.63 1156.84,966.02 1157.41,968.49 1157.74,967.92 1157.87,967.26 1157.9,967.09 1158.01,966.34 1158.55,960.27 1158.82,955.83 1159.11,949.94 1159.22,947.55 1159.62,937.47 1159.89,929.88 1159.95,928.28 1160.43,912.91 1160.52,910.19 1161.14,888.29 1161.19,886.31 1161.51,874.35 1161.89,860.3 1162.06,854.3 1162.35,843.45 1162.49,838.61 1162.68,831.96 1162.76,829.17 1162.84,826.4 1163.13,816.61 1163.7,799.74 1163.97,792.71 1164.16,788.24 1164.4,783.07 1164.62,779.05 1164.76,776.82 1165.13,771.81 1165.59,768.27 1165.65,768.04 1165.84,767.56 1165.94,767.5 1166.05,767.61 1166.16,767.87 1166.75,772.17 1166.97,774.89 1167,775.28 1167.05,776.07 1167.35,781.08 1167.7,788.36 1167.81,790.87 1168.97,824.75 1169.05,827.49 1169.16,831.2 1169.24,834.02 1169.4,839.76 1169.51,843.64 1169.64,848.54 1170.32,873.54 1170.34,874.54 1170.48,879.55 1170.96,897.23 1171.29,908.53 1171.48,914.87 1172.59,946.42 1172.91,953.38 1173.34,960.74 1173.42,961.86 1173.61,964.14 1173.83,966.17 1174.31,968.44 1174.5,968.44 1174.91,966.8 1175.1,965.27 1175.18,964.46 1175.26,963.58 1175.37,962.26 1175.64,958.3 1175.91,953.45 1176.1,949.54 1176.39,942.6 1176.82,930.92 1176.9,928.54 1176.96,926.92 1177.39,913.2 1177.63,904.95 1177.69,903.07 1178.09,888.6 1178.23,883.66 1178.69,866.64 1178.82,861.62 1179.01,854.62 1179.17,848.67 1179.39,840.85 1179.44,838.92 1179.58,834.15 1179.63,832.26 1180.04,818.63 1180.55,802.98 1180.82,795.66 1180.95,792.26 1181.12,788.44 1181.22,786.04 1181.44,781.66 1181.55,779.67 1182.17,771.07 1183.33,768.83 1183.52,770.21 1183.57,770.69 1183.9,774.4 1184.11,777.63 1184.63,787.56 1185.03,797.46 1185.41,808.14 1185.65,815.64 1185.87,822.66 1186.68,851.19 1187.7,889.14 1187.89,895.96 1188.65,921.55 1189.38,942.29 1189.54,946.22 1189.7,949.86 1189.78,951.57 1189.89,953.74 1189.92,954.26"/></g><g fill="#a2c58a"><circle cx="1085.47" cy="872.8" r="3"/><circle cx="1085.87" cy="887.5" r="3"/><circle cx="1086.44" cy="907.7" r="3"/><circle cx="1086.57" cy="912" r="3"/><circle cx="1086.71" cy="916.7" r="3"/><circle cx="1087.07" cy="928" r="3"/><circle cx="1087.61" cy="942.7" r="3"/><circle cx="1088.12" cy="954" r="3"/><circle cx="1088.54" cy="961" r="3"/><circle cx="1088.87" cy="965" r="3"/><circle cx="1089.21" cy="967.5" r="3"/><circle cx="1089.47" cy="968.4" r="3"/><circle cx="1090.18" cy="966.07" r="3"/><circle cx="1090.26" cy="965.37" r="3"/><circle cx="1090.32" cy="964.85" r="3"/><circle cx="1090.37" cy="964.3" r="3"/><circle cx="1090.4" cy="964" r="3"/><circle cx="1090.67" cy="960.56" r="3"/><circle cx="1090.99" cy="955.2" r="3"/><circle cx="1091.02" cy="954.7" r="3"/><circle cx="1091.61" cy="941.52" r="3"/><circle cx="1091.99" cy="931.23" r="3"/><circle cx="1092.21" cy="924.79" r="3"/><circle cx="1092.31" cy="921.43" r="3"/><circle cx="1092.48" cy="916.23" r="3"/><circle cx="1092.96" cy="899.66" r="3"/><circle cx="1093.2" cy="890.96" r="3"/><circle cx="1093.45" cy="882.08" r="3"/><circle cx="1093.47" cy="881.08" r="3"/><circle cx="1093.58" cy="877.08" r="3"/><circle cx="1093.61" cy="876.08" r="3"/><circle cx="1093.72" cy="872.07" r="3"/><circle cx="1094.04" cy="860.02" r="3"/><circle cx="1094.2" cy="854.03" r="3"/><circle cx="1094.34" cy="849.07" r="3"/><circle cx="1094.93" cy="827.99" r="3"/><circle cx="1094.96" cy="827.07" r="3"/><circle cx="1095.5" cy="809.65" r="3"/><circle cx="1096.23" cy="789.94" r="3"/><circle cx="1096.93" cy="776.29" r="3"/><circle cx="1097.01" cy="775.1" r="3"/><circle cx="1098.04" cy="767.51" r="3"/><circle cx="1098.09" cy="767.5" r="3"/><circle cx="1098.71" cy="770.35" r="3"/><circle cx="1098.79" cy="771.11" r="3"/><circle cx="1098.9" cy="772.25" r="3"/><circle cx="1099.06" cy="774.25" r="3"/><circle cx="1099.39" cy="779.26" r="3"/><circle cx="1099.41" cy="779.74" r="3"/><circle cx="1099.5" cy="781.22" r="3"/><circle cx="1099.6" cy="783.32" r="3"/><circle cx="1099.66" cy="784.42" r="3"/><circle cx="1099.98" cy="791.7" r="3"/><circle cx="1100.22" cy="797.89" r="3"/><circle cx="1100.28" cy="799.34" r="3"/><circle cx="1100.85" cy="816.15" r="3"/><circle cx="1100.9" cy="817.88" r="3"/><circle cx="1101.01" cy="821.4" r="3"/><circle cx="1101.49" cy="838.1" r="3"/><circle cx="1101.66" cy="843.9" r="3"/><circle cx="1101.71" cy="845.86" r="3"/><circle cx="1101.76" cy="847.83" r="3"/><circle cx="1101.79" cy="848.81" r="3"/><circle cx="1102.2" cy="863.77" r="3"/><circle cx="1102.65" cy="880.82" r="3"/><circle cx="1102.92" cy="890.7" r="3"/><circle cx="1103.09" cy="896.53" r="3"/><circle cx="1103.17" cy="899.41" r="3"/><circle cx="1103.52" cy="911.52" r="3"/><circle cx="1103.68" cy="916.88" r="3"/><circle cx="1103.71" cy="917.75" r="3"/><circle cx="1104.09" cy="929.45" r="3"/><circle cx="1104.65" cy="944.68" r="3"/><circle cx="1104.68" cy="945.32" r="3"/><circle cx="1104.9" cy="950.21" r="3"/><circle cx="1105.3" cy="957.92" r="3"/><circle cx="1105.79" cy="964.5" r="3"/><circle cx="1105.95" cy="966.01" r="3"/><circle cx="1106.6" cy="968.49" r="3"/><circle cx="1106.65" cy="968.43" r="3"/><circle cx="1106.95" cy="967.41" r="3"/><circle cx="1107.35" cy="964.1" r="3"/><circle cx="1107.38" cy="963.8" r="3"/><circle cx="1107.51" cy="962.16" r="3"/><circle cx="1107.97" cy="954.86" r="3"/><circle cx="1108.27" cy="948.78" r="3"/><circle cx="1108.43" cy="945.05" r="3"/><circle cx="1108.76" cy="936.78" r="3"/><circle cx="1108.97" cy="930.7" r="3"/><circle cx="1109.73" cy="906.55" r="3"/><circle cx="1109.76" cy="905.62" r="3"/><circle cx="1110.05" cy="895.17" r="3"/><circle cx="1110.21" cy="889.31" r="3"/><circle cx="1110.51" cy="878.4" r="3"/><circle cx="1110.7" cy="871.39" r="3"/><circle cx="1110.81" cy="867.37" r="3"/><circle cx="1110.84" cy="866.36" r="3"/><circle cx="1110.86" cy="865.36" r="3"/><circle cx="1111.21" cy="852.36" r="3"/><circle cx="1111.35" cy="847.41" r="3"/><circle cx="1111.89" cy="828.28" r="3"/><circle cx="1112" cy="824.62" r="3"/><circle cx="1112.02" cy="823.72" r="3"/><circle cx="1112.21" cy="817.52" r="3"/><circle cx="1112.24" cy="816.65" r="3"/><circle cx="1113.21" cy="789.51" r="3"/><circle cx="1113.86" cy="776.84" r="3"/><circle cx="1114.08" cy="773.75" r="3"/><circle cx="1114.21" cy="772.12" r="3"/><circle cx="1114.67" cy="768.41" r="3"/><circle cx="1114.89" cy="767.65" r="3"/><circle cx="1114.99" cy="767.51" r="3"/><circle cx="1115.45" cy="768.71" r="3"/><circle cx="1116.02" cy="774.14" r="3"/><circle cx="1116.1" cy="775.26" r="3"/><circle cx="1116.45" cy="781.06" r="3"/><circle cx="1116.78" cy="787.72" r="3"/><circle cx="1116.86" cy="789.57" r="3"/><circle cx="1116.91" cy="790.84" r="3"/><circle cx="1117.02" cy="793.48" r="3"/><circle cx="1117.48" cy="805.96" r="3"/><circle cx="1117.86" cy="817.6" r="3"/><circle cx="1118.64" cy="844.57" r="3"/><circle cx="1118.86" cy="852.46" r="3"/><circle cx="1118.88" cy="853.45" r="3"/><circle cx="1119.12" cy="862.45" r="3"/><circle cx="1119.15" cy="863.45" r="3"/><circle cx="1119.53" cy="877.5" r="3"/><circle cx="1119.69" cy="883.49" r="3"/><circle cx="1119.96" cy="893.32" r="3"/><circle cx="1120.07" cy="897.19" r="3"/><circle cx="1120.12" cy="899.11" r="3"/><circle cx="1120.45" cy="910.32" r="3"/><circle cx="1120.56" cy="913.94" r="3"/><circle cx="1120.8" cy="921.78" r="3"/><circle cx="1121.23" cy="934.62" r="3"/><circle cx="1121.91" cy="951.17" r="3"/><circle cx="1121.99" cy="952.82" r="3"/><circle cx="1122.12" cy="955.41" r="3"/><circle cx="1122.15" cy="955.9" r="3"/><circle cx="1122.28" cy="958.23" r="3"/><circle cx="1122.45" cy="960.72" r="3"/><circle cx="1122.63" cy="963.2" r="3"/><circle cx="1122.82" cy="965.22" r="3"/><circle cx="1122.85" cy="965.47" r="3"/><circle cx="1122.99" cy="966.57" r="3"/><circle cx="1123.26" cy="968.04" r="3"/><circle cx="1123.5" cy="968.5" r="3"/><circle cx="1123.58" cy="968.47" r="3"/><circle cx="1123.69" cy="968.29" r="3"/><circle cx="1124.12" cy="965.99" r="3"/><circle cx="1124.36" cy="963.59" r="3"/><circle cx="1124.42" cy="962.95" r="3"/><circle cx="1125.88" cy="932.5" r="3"/><circle cx="1126.6" cy="909.61" r="3"/><circle cx="1127.09" cy="892.56" r="3"/><circle cx="1127.71" cy="869.7" r="3"/><circle cx="1127.79" cy="866.68" r="3"/><circle cx="1128.82" cy="829.5" r="3"/><circle cx="1129.14" cy="818.67" r="3"/><circle cx="1129.33" cy="812.66" r="3"/><circle cx="1129.36" cy="811.83" r="3"/><circle cx="1130.19" cy="789.08" r="3"/><circle cx="1130.38" cy="784.92" r="3"/><circle cx="1130.63" cy="780.18" r="3"/><circle cx="1130.71" cy="778.75" r="3"/><circle cx="1130.95" cy="774.96" r="3"/><circle cx="1131.73" cy="767.98" r="3"/><circle cx="1131.84" cy="767.67" r="3"/><circle cx="1131.9" cy="767.57" r="3"/><circle cx="1132.41" cy="768.66" r="3"/><circle cx="1132.81" cy="772.06" r="3"/><circle cx="1132.87" cy="772.68" r="3"/><circle cx="1133.03" cy="774.76" r="3"/><circle cx="1133.33" cy="779.44" r="3"/><circle cx="1133.35" cy="779.91" r="3"/><circle cx="1133.46" cy="781.92" r="3"/><circle cx="1133.54" cy="783.51" r="3"/><circle cx="1133.68" cy="786.34" r="3"/><circle cx="1133.81" cy="789.37" r="3"/><circle cx="1134.03" cy="794.62" r="3"/><circle cx="1134.06" cy="795.31" r="3"/><circle cx="1134.14" cy="797.43" r="3"/><circle cx="1134.3" cy="801.85" r="3"/><circle cx="1134.76" cy="815.6" r="3"/><circle cx="1135.24" cy="831.8" r="3"/><circle cx="1135.41" cy="837.49" r="3"/><circle cx="1135.7" cy="848.18" r="3"/><circle cx="1136.11" cy="863.13" r="3"/><circle cx="1136.62" cy="882.17" r="3"/><circle cx="1136.89" cy="892.04" r="3"/><circle cx="1136.92" cy="893.01" r="3"/><circle cx="1137.27" cy="905.42" r="3"/><circle cx="1137.35" cy="908.2" r="3"/><circle cx="1137.38" cy="909.12" r="3"/><circle cx="1137.54" cy="914.54" r="3"/><circle cx="1137.97" cy="928.14" r="3"/><circle cx="1138.13" cy="932.86" r="3"/><circle cx="1138.27" cy="936.62" r="3"/><circle cx="1138.73" cy="948.05" r="3"/><circle cx="1138.81" cy="949.84" r="3"/><circle cx="1139.02" cy="954.24" r="3"/><circle cx="1139.32" cy="959.38" r="3"/><circle cx="1139.78" cy="965.14" r="3"/><circle cx="1140.1" cy="967.53" r="3"/><circle cx="1140.18" cy="967.9" r="3"/><circle cx="1140.29" cy="968.26" r="3"/><circle cx="1140.4" cy="968.46" r="3"/><circle cx="1140.75" cy="967.99" r="3"/><circle cx="1140.78" cy="967.88" r="3"/><circle cx="1141.05" cy="966.28" r="3"/><circle cx="1141.16" cy="965.36" r="3"/><circle cx="1141.32" cy="963.69" r="3"/><circle cx="1141.62" cy="959.74" r="3"/><circle cx="1141.94" cy="954.16" r="3"/><circle cx="1142.13" cy="950.33" r="3"/><circle cx="1142.32" cy="946.1" r="3"/><circle cx="1142.35" cy="945.46" r="3"/><circle cx="1142.43" cy="943.51" r="3"/><circle cx="1142.64" cy="937.97" r="3"/><circle cx="1143.51" cy="911.72" r="3"/><circle cx="1143.75" cy="903.41" r="3"/><circle cx="1143.83" cy="900.57" r="3"/><circle cx="1144.07" cy="891.9" r="3"/><circle cx="1144.86" cy="862.98" r="3"/><circle cx="1145.34" cy="845.1" r="3"/><circle cx="1145.64" cy="834.49" r="3"/><circle cx="1145.72" cy="831.66" r="3"/><circle cx="1146.39" cy="809.61" r="3"/><circle cx="1147.15" cy="789.28" r="3"/><circle cx="1147.39" cy="783.98" r="3"/><circle cx="1147.42" cy="783.44" r="3"/><circle cx="1147.88" cy="775.47" r="3"/><circle cx="1148.88" cy="767.55" r="3"/><circle cx="1149.01" cy="767.52" r="3"/><circle cx="1149.66" cy="770.86" r="3"/><circle cx="1149.69" cy="771.12" r="3"/><circle cx="1149.88" cy="773.22" r="3"/><circle cx="1150.04" cy="775.4" r="3"/><circle cx="1150.23" cy="778.36" r="3"/><circle cx="1151.04" cy="795.79" r="3"/><circle cx="1151.26" cy="801.61" r="3"/><circle cx="1151.39" cy="805.46" r="3"/><circle cx="1152.39" cy="838.14" r="3"/><circle cx="1152.66" cy="847.87" r="3"/><circle cx="1153.01" cy="860.8" r="3"/><circle cx="1153.44" cy="876.87" r="3"/><circle cx="1153.47" cy="877.87" r="3"/><circle cx="1153.6" cy="882.85" r="3"/><circle cx="1153.9" cy="893.67" r="3"/><circle cx="1154.01" cy="897.54" r="3"/><circle cx="1154.09" cy="900.41" r="3"/><circle cx="1154.28" cy="906.98" r="3"/><circle cx="1154.44" cy="912.47" r="3"/><circle cx="1154.68" cy="920.39" r="3"/><circle cx="1154.87" cy="926.26" r="3"/><circle cx="1155.12" cy="933.38" r="3"/><circle cx="1155.98" cy="954.07" r="3"/><circle cx="1156.25" cy="958.82" r="3"/><circle cx="1156.28" cy="959.25" r="3"/><circle cx="1156.36" cy="960.47" r="3"/><circle cx="1156.6" cy="963.63" r="3"/><circle cx="1156.84" cy="966.02" r="3"/><circle cx="1157.41" cy="968.49" r="3"/><circle cx="1157.74" cy="967.92" r="3"/><circle cx="1157.87" cy="967.26" r="3"/><circle cx="1157.9" cy="967.09" r="3"/><circle cx="1158.01" cy="966.34" r="3"/><circle cx="1158.55" cy="960.27" r="3"/><circle cx="1158.82" cy="955.83" r="3"/><circle cx="1159.11" cy="949.94" r="3"/><circle cx="1159.22" cy="947.55" r="3"/><circle cx="1159.62" cy="937.47" r="3"/><circle cx="1159.89" cy="929.88" r="3"/><circle cx="1159.95" cy="928.28" r="3"/><circle cx="1160.43" cy="912.91" r="3"/><circle cx="1160.52" cy="910.19" r="3"/><circle cx="1161.14" cy="888.29" r="3"/><circle cx="1161.19" cy="886.31" r="3"/><circle cx="1161.51" cy="874.35" r="3"/><circle cx="1161.89" cy="860.3" r="3"/><circle cx="1162.06" cy="854.3" r="3"/><circle cx="1162.35" cy="843.45" r="3"/><circle cx="1162.49" cy="838.61" r="3"/><circle cx="1162.68" cy="831.96" r="3"/><circle cx="1162.76" cy="829.17" r="3"/><circle cx="1162.84" cy="826.4" r="3"/><circle cx="1163.13" cy="816.61" r="3"/><circle cx="1163.7" cy="799.74" r="3"/><circle cx="1163.97" cy="792.71" r="3"/><circle cx="1164.16" cy="788.24" r="3"/><circle cx="1164.4" cy="783.07" r="3"/><circle cx="1164.62" cy="779.05" r="3"/><circle cx="1164.76" cy="776.82" r="3"/><circle cx="1165.13" cy="771.81" r="3"/><circle cx="1165.59" cy="768.27" r="3"/><circle cx="1165.65" cy="768.04" r="3"/><circle cx="1165.84" cy="767.56" r="3"/><circle cx="1165.94" cy="767.5" r="3"/><circle cx="1166.05" cy="767.61" r="3"/><circle cx="1166.16" cy="767.87" r="3"/><circle cx="1166.75" cy="772.17" r="3"/><circle cx="1166.97" cy="774.89" r="3"/><circle cx="1167" cy="775.28" r="3"/><circle cx="1167.05" cy="776.07" r="3"/><circle cx="1167.35" cy="781.08" r="3"/><circle cx="1167.7" cy="788.36" r="3"/><circle cx="1167.81" cy="790.87" r="3"/><circle cx="1168.97" cy="824.75" r="3"/><circle cx="1169.05" cy="827.49" r="3"/><circle cx="1169.16" cy="831.2" r="3"/><circle cx="1169.24" cy="834.02" r="3"/><circle cx="1169.4" cy="839.76" r="3"/><circle cx="1169.51" cy="843.64" r="3"/><circle cx="1169.64" cy="848.54" r="3"/><circle cx="1170.32" cy="873.54" r="3"/><circle cx="1170.34" cy="874.54" r="3"/><circle cx="1170.48" cy="879.55" r="3"/><circle cx="1170.96" cy="897.23" r="3"/><circle cx="1171.29" cy="908.53" r="3"/><circle cx="1171.48" cy="914.87" r="3"/><circle cx="1172.59" cy="946.42" r="3"/><circle cx="1172.91" cy="953.38" r="3"/><circle cx="1173.34" cy="960.74" r="3"/><circle cx="1173.42" cy="961.86" r="3"/><circle cx="1173.61" cy="964.14" r="3"/><circle cx="1173.83" cy="966.17" r="3"/><circle cx="1174.31" cy="968.44" r="3"/><circle cx="1174.5" cy="968.44" r="3"/><circle cx="1174.91" cy="966.8" r="3"/><circle cx="1175.1" cy="965.27" r="3"/><circle cx="1175.18" cy="964.46" r="3"/><circle cx="1175.26" cy="963.58" r="3"/><circle cx="1175.37" cy="962.26" r="3"/><circle cx="1175.64" cy="958.3" r="3"/><circle cx="1175.91" cy="953.45" r="3"/><circle cx="1176.1" cy="949.54" r="3"/><circle cx="1176.39" cy="942.6" r="3"/><circle cx="1176.82" cy="930.92" r="3"/><circle cx="1176.9" cy="928.54" r="3"/><circle cx="1176.96" cy="926.92" r="3"/><circle cx="1177.39" cy="913.2" r="3"/><circle cx="1177.63" cy="904.95" r="3"/><circle cx="1177.69" cy="903.07" r="3"/><circle cx="1178.09" cy="888.6" r="3"/><circle cx="1178.23" cy="883.66" r="3"/><circle cx="1178.69" cy="866.64" r="3"/><circle cx="1178.82" cy="861.62" r="3"/><circle cx="1179.01" cy="854.62" r="3"/><circle cx="1179.17" cy="848.67" r="3"/><circle cx="1179.39" cy="840.85" r="3"/><circle cx="1179.44" cy="838.92" r="3"/><circle cx="1179.58" cy="834.15" r="3"/><circle cx="1179.63" cy="832.26" r="3"/><circle cx="1180.04" cy="818.63" r="3"/><circle cx="1180.55" cy="802.98" r="3"/><circle cx="1180.82" cy="795.66" r="3"/><circle cx="1180.95" cy="792.26" r="3"/><circle cx="1181.12" cy="788.44" r="3"/><circle cx="1181.22" cy="786.04" r="3"/><circle cx="1181.44" cy="781.66" r="3"/><circle cx="1181.55" cy="779.67" r="3"/><circle cx="1182.17" cy="771.07" r="3"/><circle cx="1183.33" cy="768.83" r="3"/><circle cx="1183.52" cy="770.21" r="3"/><circle cx="1183.57" cy="770.69" r="3"/><circle cx="1183.9" cy="774.4" r="3"/><circle cx="1184.11" cy="777.63" r="3"/><circle cx="1184.63" cy="787.56" r="3"/><circle cx="1185.03" cy="797.46" r="3"/><circle cx="1185.41" cy="808.14" r="3"/><circle cx="1185.65" cy="815.64" r="3"/><circle cx="1185.87" cy="822.66" r="3"/><circle cx="1186.68" cy="851.19" r="3"/><circle cx="1187.7" cy="889.14" r="3"/><circle cx="1187.89" cy="895.96" r="3"/><circle cx="1188.65" cy="921.55" r="3"/><circle cx="1189.38" cy="942.29" r="3"/><circle cx="1189.54" cy="946.22" r="3"/><circle cx="1189.7" cy="949.86" r="3"/><circle cx="1189.78" cy="951.57" r="3"/><circle cx="1189.89" cy="953.74" r="3"/><circle cx="1189.92" cy="954.26" r="3"/></g><rect x="751.5" y="751.5" width="466" height="233" fill="none" stroke="#fff" stroke-width="1"/><line x1="771.5" x2="771.5" y1="985" y2="990" stroke="#fff" stroke-width="1"/><line x1="906.5" x2="906.5" y1="985" y2="990" stroke="#fff" stroke-width="1"/><line x1="1041.5" x2="1041.5" y1="985" y2="990" stroke="#fff" stroke-width="1"/><line x1="1176.5" x2="1176.5" y1="985" y2="990" stroke="#fff" stroke-width="1"/><line x1="746" x2="751" y1="767.5" y2="767.5" stroke="#fff" stroke-width="1"/><line x1="746" x2="751" y1="817.5" y2="817.5" stroke="#fff" stroke-width="1"/><line x1="746" x2="751" y1="868.5" y2="868.5" stroke="#fff" stroke-width="1"/><line x1="746" x2="751" y1="918.5" y2="918.5" stroke="#fff" stroke-width="1"/><line x1="746" x2="751" y1="968.5" y2="968.5" stroke="#fff" stroke-width="1"/><text transform="translate(771.5,1004) scale(0.955,1)" font-size="12" text-anchor="middle" fill="#c6c8de" >0</text><text transform="translate(906.5,1004) scale(0.955,1)" font-size="12" text-anchor="middle" fill="#c6c8de" >5k</text><text transform="translate(1041.5,1004) scale(0.955,1)" font-size="12" text-anchor="middle" fill="#c6c8de" >10k</text><text transform="translate(1176.5,1004) scale(0.955,1)" font-size="12" text-anchor="middle" fill="#c6c8de" >15k</text><text transform="translate(743.5,771.7) scale(0.955,1)" font-size="12" text-anchor="end" fill="#c6c8de" >1</text><text transform="translate(743.5,821.7) scale(0.955,1)" font-size="12" text-anchor="end" fill="#c6c8de" >0.5</text><text transform="translate(743.5,872.7) scale(0.955,1)" font-size="12" text-anchor="end" fill="#c6c8de" >0</text><text transform="translate(743.5,922.7) scale(0.955,1)" font-size="12" text-anchor="end" fill="#c6c8de" >−0.5</text><text transform="translate(743.5,972.7) scale(0.955,1)" font-size="12" text-anchor="end" fill="#c6c8de" >−1</text><text transform="translate(984,1033) scale(0.955,1)" font-size="14" text-anchor="middle" fill="#c6c8de" >index</text><text transform="translate(701,868) rotate(-90) scale(0.955,1)" font-size="14" text-anchor="middle" fill="#c6c8de">Values</text></svg></div></section>
</main>
</body></html>
